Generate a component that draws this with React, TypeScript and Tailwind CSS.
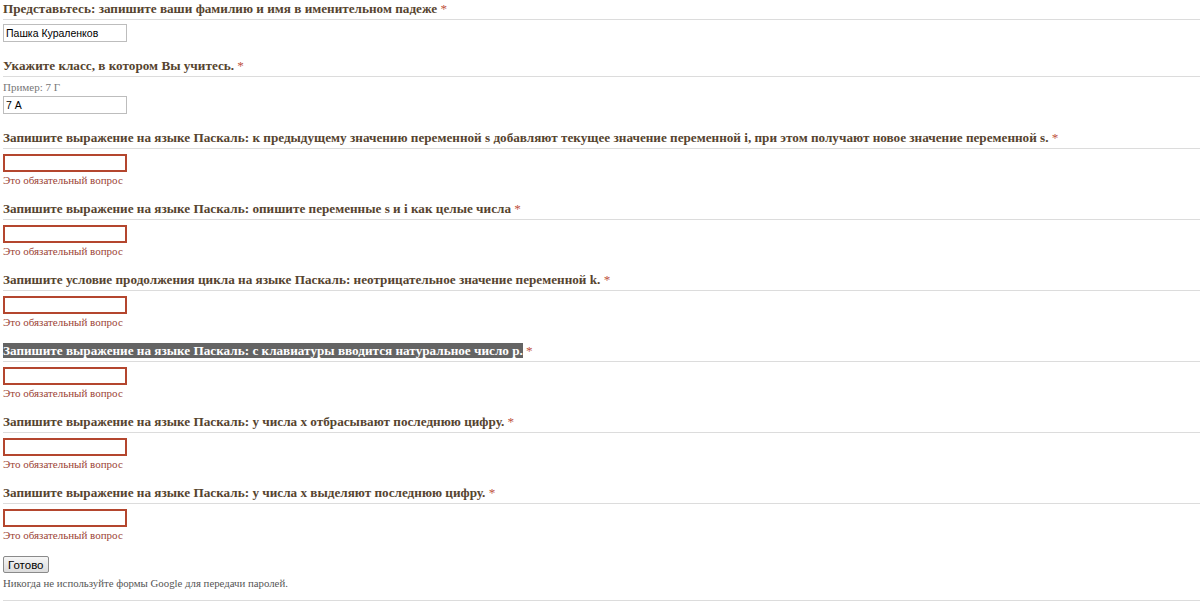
import React from "react";

interface Question {
  title: string;
  help?: string;
  value?: string;
  error?: boolean;
  highlight?: boolean;
}

const questions: Question[] = [
  {
    title: "Представьтесь: запишите ваши фамилию и имя в именительном падеже",
    value: "Пашка Кураленков",
  },
  { title: "Укажите класс, в котором Вы учитесь.", help: "Пример: 7 Г", value: "7 А" },
  {
    title:
      "Запишите выражение на языке Паскаль: к предыдущему значению переменной s добавляют текущее значение переменной i, при этом получают новое значение переменной s.",
    error: true,
  },
  { title: "Запишите выражение на языке Паскаль: опишите переменные s и i как целые числа", error: true },
  {
    title: "Запишите условие продолжения цикла на языке Паскаль: неотрицательное значение переменной k.",
    error: true,
  },
  {
    title: "Запишите выражение на языке Паскаль: с клавиатуры вводится натуральное число p.",
    error: true,
    highlight: true,
  },
  { title: "Запишите выражение на языке Паскаль: у числа x отбрасывают последнюю цифру.", error: true },
  { title: "Запишите выражение на языке Паскаль: у числа x выделяют последнюю цифру.", error: true },
];

function QuestionBlock({ q }: { q: Question }) {
  return (
    <div className={q.error ? "mb-[14px]" : "mb-[16px]"}>
      <div className="border-b border-[#dcdcdc] pb-[2px] text-[13.2px] font-bold leading-[16px] text-[#56442f]">
        <span className={q.highlight ? "bg-[#646464] text-white" : ""}>{q.title}</span>{" "}
        <span className="font-normal text-[#c0533f]">*</span>
      </div>
      {q.help && (
        <div className="mt-[3px] text-[11px] leading-[14px] text-[#777]">{q.help}</div>
      )}
      <input
        readOnly
        value={q.value ?? ""}
        className={
          "block h-[18px] w-[124px] px-[2px] text-[10.5px] text-black outline-none font-['Liberation_Sans',Arial,sans-serif] " +
          (q.error
            ? "mt-[5px] border-2 border-[#b4462e]"
            : q.help
            ? "mt-[2px] border border-[#bdbdbd]"
            : "mt-[4px] border border-[#bdbdbd]")
        }
      />
      {q.error && (
        <div className="mt-[1px] text-[11px] leading-[14px] text-[#9c4436]">Это обязательный вопрос</div>
      )}
    </div>
  );
}

export default function App() {
  return (
    <div className="min-h-[605px] bg-white font-['Liberation_Serif','Times_New_Roman',serif]">
      <div className="pt-[1px] pl-[3px]">
        {questions.map((q, i) => (
          <QuestionBlock key={i} q={q} />
        ))}
        <button className="mt-[3px] block h-[17px] rounded-[2px] border border-[#8a8a8a] bg-gradient-to-b from-[#f6f6f6] to-[#dcdcdc] px-[4px] font-['Liberation_Sans',Arial,sans-serif] text-[11.5px] leading-[14px] text-black">
          Готово
        </button>
        <div className="mt-[3px] text-[10.8px] leading-[14px] text-[#555]">
          Никогда не используйте формы Google для передачи паролей.
        </div>
        <div className="mt-[10px] border-b border-[#dcdcdc]" />
      </div>
    </div>
  );
}
